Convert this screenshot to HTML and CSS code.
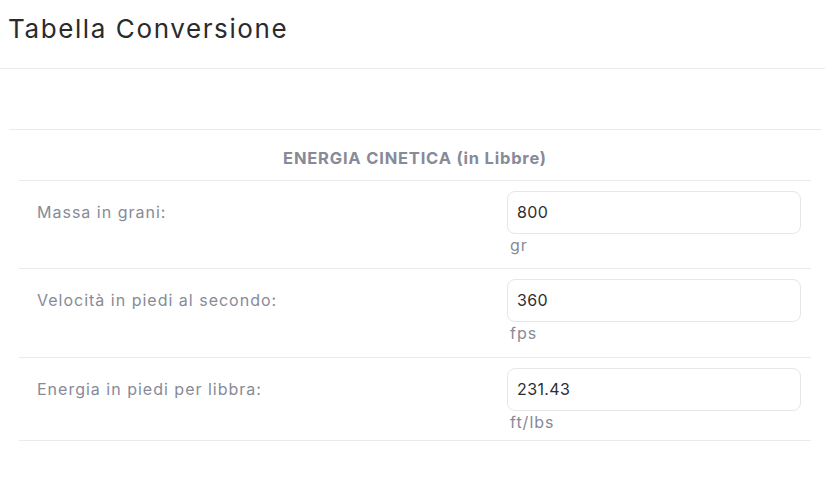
FILE: index.html
```html
<!DOCTYPE html>
<html lang="it">
<head>
<meta charset="utf-8">
<title>Tabella Conversione</title>
<link rel="stylesheet" href="styles.css">
</head>
<body>
<header class="page-header">
  <h1 class="page-title">Tabella Conversione</h1>
</header>
<main class="content">
  <section class="card">
    <table class="conv-table">
      <thead>
        <tr><th colspan="2" class="table-head">ENERGIA CINETICA (in Libbre)</th></tr>
      </thead>
      <tbody>
        <tr>
          <td class="label">Massa in grani:</td>
          <td class="field"><div class="input">800</div><div class="unit">gr</div></td>
        </tr>
        <tr class="mid">
          <td class="label">Velocità in piedi al secondo:</td>
          <td class="field"><div class="input">360</div><div class="unit">fps</div></td>
        </tr>
        <tr class="last">
          <td class="label">Energia in piedi per libbra:</td>
          <td class="field"><div class="input">231.43</div><div class="unit">ft/lbs</div></td>
        </tr>
      </tbody>
    </table>
  </section>
</main>
</body>
</html>
```

FILE: styles.css
```css
* { box-sizing: border-box; }
body {
  margin: 0;
  background: #fff;
  font-family: "Inter", "Noto Sans", sans-serif;
  color: #333;
}
.page-header {
  height: 69px;
  border-bottom: 1px solid #ebebeb;
  padding: 12px 8px 0;
}
.page-title {
  margin: 0;
  font-weight: 400;
  font-size: 26px;
  line-height: 34px;
  letter-spacing: 1.6px;
  color: #2b2b2b;
}
.content {
  padding: 60px 4px 0 9px;
}
.card {
  border-top: 1px solid #ebebeb;
  padding: 0 10px;
}
.conv-table {
  width: 100%;
  border-collapse: collapse;
}
.table-head {
  height: 50px;
  padding: 17px 0 11px;
  line-height: 22px;
  text-align: center;
  font-size: 16.5px;
  font-weight: 700;
  letter-spacing: 0.8px;
  color: #878a97;
  border-bottom: 1px solid #ebebeb;
}
.conv-table td {
  border-bottom: 1px solid #ebebeb;
  vertical-align: top;
}
.label {
  padding: 20px 18px 0;
  font-size: 16px;
  line-height: 22px;
  letter-spacing: 1px;
  color: #878a97;
  height: 88px;
}
.mid .label { height: 89px; }
.last .label { height: 83px; }
.field {
  width: 304px;
  padding: 10px 10px 0 0;
}
.input {
  height: 43px;
  border: 1px solid #e6e6e6;
  border-radius: 8px;
  padding: 0 9px;
  font-size: 16px;
  line-height: 41px;
  letter-spacing: 0.4px;
  color: #2e2e33;
}
.unit {
  padding: 0 0 0 3px;
  font-size: 16px;
  line-height: 22px;
  letter-spacing: 1px;
  color: #878a97;
}
```
